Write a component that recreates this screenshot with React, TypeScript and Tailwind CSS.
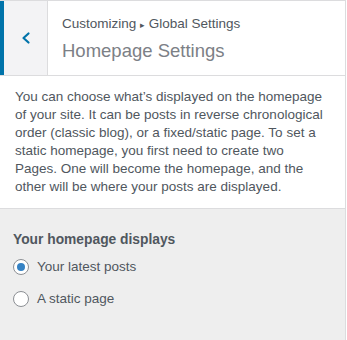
import { useState } from 'react';

const options = [
  { id: 'posts', label: 'Your latest posts' },
  { id: 'page', label: 'A static page' },
];

const HomepageSettings = () => {
  const [choice, setChoice] = useState('posts');

  return (
    <div className="h-[340px] w-[346px] border-r border-[#dcdcde] bg-[#eeeeee] font-['Liberation_Sans',Arial,sans-serif]">
      <div className="flex h-[76px] border-y border-[#dcdcde] bg-white">
        <button className="flex w-[48px] items-center justify-center border-l-4 border-r border-l-[#0073aa] border-r-[#dcdcde] bg-[#f3f3f5] text-[#0073aa]">
          <svg width="12" height="14" viewBox="0 0 12 14" fill="none">
            <path d="M8.5 2.5L3.5 7l5 4.5" stroke="currentColor" strokeWidth="2.2" strokeLinecap="round" strokeLinejoin="round" />
          </svg>
        </button>
        <div className="pl-[14px] pt-[14px]">
          <p className="text-[13.5px] leading-[18px] text-[#50575e]">
            Customizing <span className="text-[9px]">▸</span> Global Settings
          </p>
          <h2 className="mt-[4px] text-[18.5px] font-normal leading-[26px] text-[#7c8086]">Homepage Settings</h2>
        </div>
      </div>

      <div className="border-b border-[#dcdcde] bg-white py-[12px] pl-[15px] pr-[17px]">
        <p className="text-[13.5px] leading-[18px] text-[#50575e]">
          You can choose what’s displayed on the homepage of your site. It can be posts in reverse chronological order
          (classic blog), or a fixed/static page. To set a static homepage, you first need to create two Pages. One will
          become the homepage, and the other will be where your posts are displayed.
        </p>
      </div>

      <div className="px-[13px] pt-[21px]">
        <h3 className="text-[13.8px] font-semibold leading-[20px] text-[#50575e]">Your homepage displays</h3>
        <div className="mt-[7px] flex flex-col gap-[12px]">
          {options.map(o => (
            <label key={o.id} className="flex cursor-pointer items-center gap-[8px]" onClick={() => setChoice(o.id)}>
              <span className="flex h-[16px] w-[16px] items-center justify-center rounded-full border border-[#8c8f94] bg-white">
                {choice === o.id && <span className="h-[8px] w-[8px] rounded-full bg-[#3582c4]" />}
              </span>
              <span className="text-[13.5px] leading-[20px] text-[#50575e]">{o.label}</span>
            </label>
          ))}
        </div>
      </div>
    </div>
  );
};

export default HomepageSettings;
